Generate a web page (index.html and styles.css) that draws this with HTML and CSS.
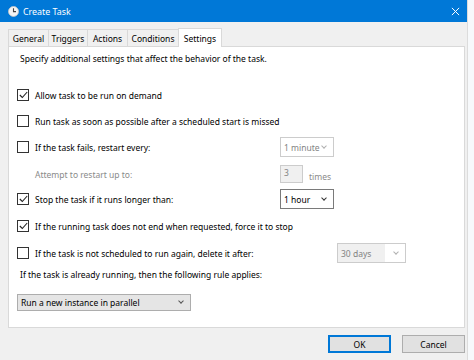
FILE: index.html
```html
<!DOCTYPE html>
<html>
<head>
<meta charset="utf-8">
<link rel="stylesheet" href="styles.css">
</head>
<body>
<div class="window">
  <div class="titlebar">
    <svg class="app-icon" width="11" height="11" viewBox="0 0 11 11"><circle cx="5.5" cy="5.5" r="5" fill="#f4f4f4" stroke="#c8c8c8" stroke-width="0.8"/><path d="M5.5 2.2V5.6H8" fill="none" stroke="#444" stroke-width="1.1"/></svg>
    <span class="title">Create Task</span>
    <svg class="close" width="9" height="9" viewBox="0 0 10 10"><path d="M1 1L9 9M9 1L1 9" stroke="#fff" stroke-width="1.1"/></svg>
  </div>
  <div class="tabs">
    <div class="tab t-general">General</div>
    <div class="tab t-triggers">Triggers</div>
    <div class="tab t-actions">Actions</div>
    <div class="tab t-conditions">Conditions</div>
    <div class="tab t-settings active">Settings</div>
  </div>
  <div class="panel">
    <div class="intro">Specify additional settings that affect the behavior of the task.</div>
    <div class="row r1"><span class="cb checked"><svg width="9" height="8" viewBox="0 0 9 8"><path d="M0.8 4L3.3 6.5L8.2 1" fill="none" stroke="#222" stroke-width="1.1"/></svg></span><span class="label">Allow task to be run on demand</span></div>
    <div class="row r2"><span class="cb"></span><span class="label">Run task as soon as possible after a scheduled start is missed</span></div>
    <div class="row r3"><span class="cb"></span><span class="label wide">If the task fails, restart every:</span><span class="dd disabled w53">1 minute<i class="chev"></i></span></div>
    <div class="row r4"><span class="label indent wide2 dim">Attempt to restart up to:</span><span class="num">3</span><span class="times">times</span></div>
    <div class="row r5"><span class="cb checked"><svg width="9" height="8" viewBox="0 0 9 8"><path d="M0.8 4L3.3 6.5L8.2 1" fill="none" stroke="#222" stroke-width="1.1"/></svg></span><span class="label wide">Stop the task if it runs longer than:</span><span class="dd w53">1 hour<i class="chev"></i></span></div>
    <div class="row r6"><span class="cb checked"><svg width="9" height="8" viewBox="0 0 9 8"><path d="M0.8 4L3.3 6.5L8.2 1" fill="none" stroke="#222" stroke-width="1.1"/></svg></span><span class="label">If the running task does not end when requested, force it to stop</span></div>
    <div class="row r7"><span class="cb"></span><span class="label wide3">If the task is not scheduled to run again, delete it after:</span><span class="dd disabled gray w68">30 days<i class="chev"></i></span></div>
    <div class="rule">If the task is already running, then the following rule applies:</div>
    <div class="select">Run a new instance in parallel<i class="chev"></i></div>
  </div>
  <div class="buttons">
    <button class="btn default">OK</button>
    <button class="btn">Cancel</button>
  </div>
</div>
</body>
</html>
```
FILE: styles.css
```css
* { box-sizing: border-box; }
html, body { margin: 0; padding: 0; }
body {
  width: 474px; height: 360px; overflow: hidden;
  background: #f7f9fb;
  font-family: "Noto Sans", "Open Sans", sans-serif;
  font-size: 8.5px;
  color: #000;
}
.window { width: 468px; height: 360px; background: #f0f0f0; border-right: 1px solid #dcdcdc; }
.titlebar {
  height: 22px; background: #0078d7; color: #fff;
  display: flex; align-items: center; padding: 0 7px 0 8px;
}
.app-icon { flex: none; }
.title { margin-left: 4px; font-size: 8.9px; flex: 1; }
.close { flex: none; }
.tabs { display: flex; align-items: flex-end; height: 24px; padding-left: 8px; }
.tab {
  height: 17px; border: 1px solid #d9d9d9; border-bottom: none; margin-right: -1px;
  display: flex; align-items: center; justify-content: center; background: #f0f0f0;
}
.t-general { width: 41px; }
.t-triggers { width: 40px; }
.t-actions { width: 41px; }
.t-conditions { width: 52px; }
.t-settings { width: 44px; }
.tab.active { height: 19px; background: #fff; position: relative; top: 1px; }
.panel {
  margin-left: 8px; width: 457px; height: 282px; background: #fff; border: 1px solid #d9d9d9;
  display: flex; flex-direction: column; padding-left: 8px;
}
.intro { height: 23px; display: flex; align-items: center; padding-left: 3px; }
.row { display: flex; align-items: center; }
.r1 { margin-top: 12px; height: 26px; }
.r2 { height: 26px; }
.r3 { height: 26px; }
.r4 { height: 28px; }
.r5 { height: 22px; }
.r6 { height: 32px; }
.r7 { height: 22px; }
.cb {
  width: 12px; height: 12px; border: 1px solid #333; flex: none; background: #fff;
  display: flex; align-items: center; justify-content: center; margin-right: 6px;
}
.label { white-space: nowrap; }
.wide { width: 245px; }
.wide2 { width: 245px; }
.indent { margin-left: 18px; }
.wide3 { width: 302px; }
.dim { color: #8a8a8a; }
.dd {
  position: relative; height: 20px; border: 1px solid #7a7a7a; background: #fff;
  display: flex; align-items: center; padding-left: 3px;
}
.w53 { width: 54px; }
.w68 { width: 69px; }
.dd.disabled { border-color: #cccccc; color: #838383; }
.dd.gray { background: linear-gradient(90deg, #f0f0f0 0, #f0f0f0 70%, #fff 70%); }
.chev {
  position: absolute; right: 7px; top: 6px; width: 4px; height: 4px;
  border-right: 1px solid #333; border-bottom: 1px solid #333; transform: rotate(45deg);
}
.disabled .chev { border-color: #b0b0b0; }
.num {
  width: 23px; height: 18px; border: 1px solid #cccccc; background: #f0f0f0; color: #838383;
  padding-left: 3px; display: flex; align-items: flex-start; line-height: 13px;
}
.times { margin-left: 6px; color: #8a8a8a; margin-top: 5px; }
.rule { height: 20px; display: flex; align-items: center; padding-left: 3px; }
.select {
  position: relative; margin-top: 10px; width: 174px; height: 17px; background: #e5e5e5; border: 1px solid #adadad;
  display: flex; align-items: center; padding-left: 3px;
}
.select .chev { top: 4px; right: 7px; border-color: #555; }
.buttons { display: flex; justify-content: flex-end; gap: 11px; padding: 7px 2px 0 0; }
.btn {
  width: 63px; height: 18px; font: inherit; font-size: 8.5px; background: #e1e1e1; border: 1px solid #adadad;
  padding: 0; color: #000;
}
.btn.default { border: 2px solid #0078d7; }
```
